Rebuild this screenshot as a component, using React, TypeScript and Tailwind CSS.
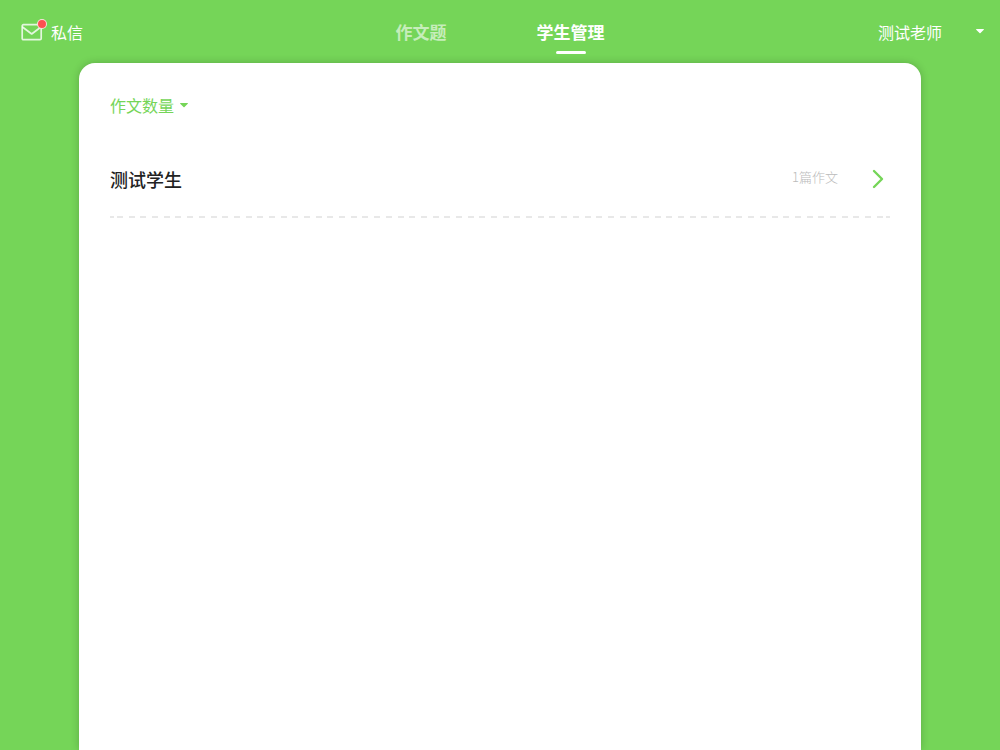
import { useState } from 'react';
import clsx from 'clsx';

const TABS = ['作文题', '学生管理'];

const STUDENTS = [{ name: '测试学生', essays: 1 }];

const DASHES = Array.from({ length: 66 }, (_, i) => i);

function MailIcon() {
  return (
    <svg width="22" height="18" viewBox="0 0 22 18" fill="none" stroke="currentColor" strokeWidth="1.7" strokeLinecap="round" strokeLinejoin="round" className="text-white/80">
      <rect x="1.2" y="1.7" width="19" height="15" rx="1.2" />
      <path d="M1.8 4.2 10.7 11 19.6 4.2" />
    </svg>
  );
}

function Caret() {
  return (
    <svg width="8" height="5" viewBox="0 0 8 5" fill="currentColor">
      <path d="M.5 0h7c.4 0 .6.5.3.8L4.5 4.1a.7.7 0 0 1-1 0L.2.8C-.1.5.1 0 .5 0z" />
    </svg>
  );
}

// Dashed rule with a short dash at both ends
function Divider() {
  return (
    <div className="flex h-[2px] justify-between">
      <span className="mr-[3px] w-1 bg-[#e8e8e8]" />
      <div className="flex flex-1 justify-between">
        {DASHES.map(i => (
          <span key={i} className="w-1.5 bg-[#e8e8e8]" />
        ))}
      </div>
      <span className="ml-[3px] w-1 bg-[#e8e8e8]" />
    </div>
  );
}

export default function App() {
  const [tab, setTab] = useState('学生管理');

  return (
    <div className="flex min-h-screen flex-col bg-[#75d558] font-['Noto_Sans_CJK_SC',sans-serif] text-white">
      <header className="grid h-[63px] grid-cols-[1fr_auto_1fr] items-center px-4">
        <button className="flex items-center gap-2 justify-self-start pl-[5px] text-base">
          <span className="relative">
            <MailIcon />
            <span className="absolute -top-1 -right-1 size-2.5 rounded-full border border-white/80 bg-[#ff5050]" />
          </span>
          私信
        </button>

        <nav className="flex gap-[90px]">
          {TABS.map(t => (
            <button
              key={t}
              onClick={() => setTab(t)}
              className={clsx('relative text-[17px] leading-6 font-bold', tab === t ? 'text-white' : 'text-white/60')}
            >
              {t}
              {tab === t && <span className="absolute -bottom-2.5 left-1/2 h-[3px] w-[30px] -translate-x-1/2 rounded-full bg-white" />}
            </button>
          ))}
        </nav>

        <button className="flex items-center gap-[34px] justify-self-end text-base">
          测试老师
          <Caret />
        </button>
      </header>

      <main className="mx-[79px] flex-1 rounded-t-[16px] bg-white px-[31px] pt-[30px] shadow-[0_0_8px_rgba(0,0,0,0.2)]">
        <button className="flex items-center gap-1.5 text-base leading-6 text-[#75d558]">
          作文数量
          <Caret />
        </button>

        <ul className="mt-6">
          {STUDENTS.map(s => (
            <li key={s.name}>
              <button className="flex h-[75px] w-full items-center pr-1.5">
                <span className="text-lg font-medium text-[#222222]">{s.name}</span>
                <span className="mr-[34px] mb-1 ml-auto text-[13px] font-light text-[#bbbbbb]">{s.essays}篇作文</span>
                <svg width="12" height="20" viewBox="0 0 12 20" fill="none" stroke="#75d558" strokeWidth="2.4" strokeLinecap="round" strokeLinejoin="round">
                  <path d="M2 2l8 8-8 8" />
                </svg>
              </button>
              <Divider />
            </li>
          ))}
        </ul>
      </main>
    </div>
  );
}
